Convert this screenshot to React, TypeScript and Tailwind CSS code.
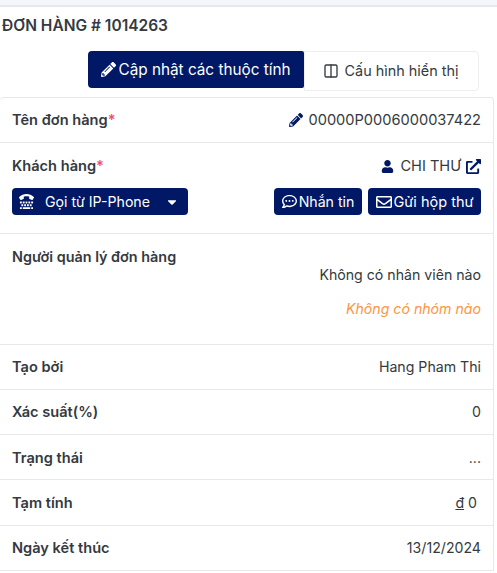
import { Columns2 } from "lucide-react";
import { FaPencilAlt, FaUser, FaExternalLinkAlt, FaRegCommentDots, FaRegEnvelope, FaTty, FaCaretDown } from "react-icons/fa";

const simpleRows = [
  { label: "Tạo bởi", value: "Hang Pham Thi", h: "h-[45px] pb-[1px]" },
  { label: "Xác suất(%)", value: "0", h: "h-[45px] pb-[1px]" },
  { label: "Trạng thái", value: "...", h: "h-[45px] pt-[1px]" },
  { label: "Tạm tính", value: "", h: "h-[46px] pt-[1px]" },
  { label: "Ngày kết thúc", value: "13/12/2024", h: "h-[45px] pb-[1px]" },
];

function Required() {
  return <span className="text-[#f0506e]">*</span>;
}

function SmallButton({ children, className = "" }: { children: React.ReactNode; className?: string }) {
  return (
    <button className={`flex h-[27px] items-center rounded-[4px] bg-[#001866] text-white ${className}`}>
      {children}
    </button>
  );
}

export default function App() {
  return (
    <div className="h-[573px] w-[497px] overflow-hidden bg-white font-['Inter',sans-serif] text-[14.15px] leading-[18px] text-[#343a40]">
      <div className="h-[7px] border-b-2 border-[#e6e8ec] bg-[#f4f6fb]" />
      <h2 className="mt-[10px] pl-[2px] text-[15.5px] leading-[18px] font-semibold text-[#343a40]">ĐƠN HÀNG # 1014263</h2>
      <div className="mt-[16px] flex justify-end pr-[18px]">
        <button className="flex h-[37px] w-[216px] items-center justify-center gap-[2px] rounded-l-[4px] rounded-r-[2px] bg-[#001866] text-[15.3px] text-white">
          <FaPencilAlt className="h-[15px] w-[15px]" />
          Cập nhật các thuộc tính
        </button>
        <button className="flex h-[40px] w-[175px] items-center justify-center gap-[6px] rounded-r-[4px] border border-[#eceef1] pr-[2px] text-[14.4px]">
          <Columns2 className="h-[16px] w-[16px]" strokeWidth={2} />
          Cấu hình hiển thị
        </button>
      </div>
      <div className="mt-[6px] mr-[3px] rounded-t-[4px] border-t border-r border-[#e6e9ec]">
        <div className="flex h-[45px] items-center justify-between border-b border-[#e6e9ec] px-[12px]">
          <span className="text-[14.6px] font-semibold">
            Tên đơn hàng
            <Required />
          </span>
          <span className="flex items-center gap-[5px] text-[14.6px]">
            <FaPencilAlt className="h-[14px] w-[14px] text-[#001866]" />
            00000P0006000037422
          </span>
        </div>
        <div className="h-[91px] border-b border-[#e6e9ec] px-[12px] pt-[14px]">
          <div className="flex items-center justify-between">
            <span className="text-[14.6px] font-semibold">
              Khách hàng
              <Required />
            </span>
            <span className="flex items-center gap-[6px] text-[14.6px]">
              <FaUser className="h-[13px] w-[13px] text-[#001866]" />
              CHI THƯ
              <FaExternalLinkAlt className="ml-[-1px] h-[15px] w-[15px] text-[#001866]" />
            </span>
          </div>
          <div className="mt-[13px] flex items-center justify-between">
            <SmallButton className="w-[176px] pr-[9px] pl-[7px]">
              <FaTty className="h-[15px] w-[15px]" />
              <span className="ml-[11px]">Gọi từ IP-Phone</span>
              <FaCaretDown className="ml-auto h-[14px] w-[14px]" />
            </SmallButton>
            <div className="flex gap-[6px]">
              <SmallButton className="w-[88px] justify-center gap-[2px]">
                <FaRegCommentDots className="h-[15px] w-[15px]" />
                Nhắn tin
              </SmallButton>
              <SmallButton className="w-[113px] justify-center gap-[2px] text-[14.5px]">
                <FaRegEnvelope className="h-[16px] w-[16px]" />
                Gửi hộp thư
              </SmallButton>
            </div>
          </div>
        </div>
        <div className="h-[111px] border-b border-[#e6e9ec] px-[12px] pt-[14px]">
          <div className="text-[14.4px] font-semibold">Người quản lý đơn hàng</div>
          <div className="text-right">Không có nhân viên nào</div>
          <div className="mt-[16px] text-right text-[#fd9644] italic">Không có nhóm nào</div>
        </div>
        {simpleRows.map((row) => (
          <div key={row.label} className={`flex items-center justify-between border-b border-[#e6e9ec] px-[12px] ${row.h}`}>
            <span className="text-[14.6px] font-semibold">{row.label}</span>
            {row.label === "Tạm tính" ? (
              <span className="pr-[4px]">
                <span className="underline">đ</span> 0
              </span>
            ) : (
              <span>{row.value}</span>
            )}
          </div>
        ))}
      </div>
    </div>
  );
}
